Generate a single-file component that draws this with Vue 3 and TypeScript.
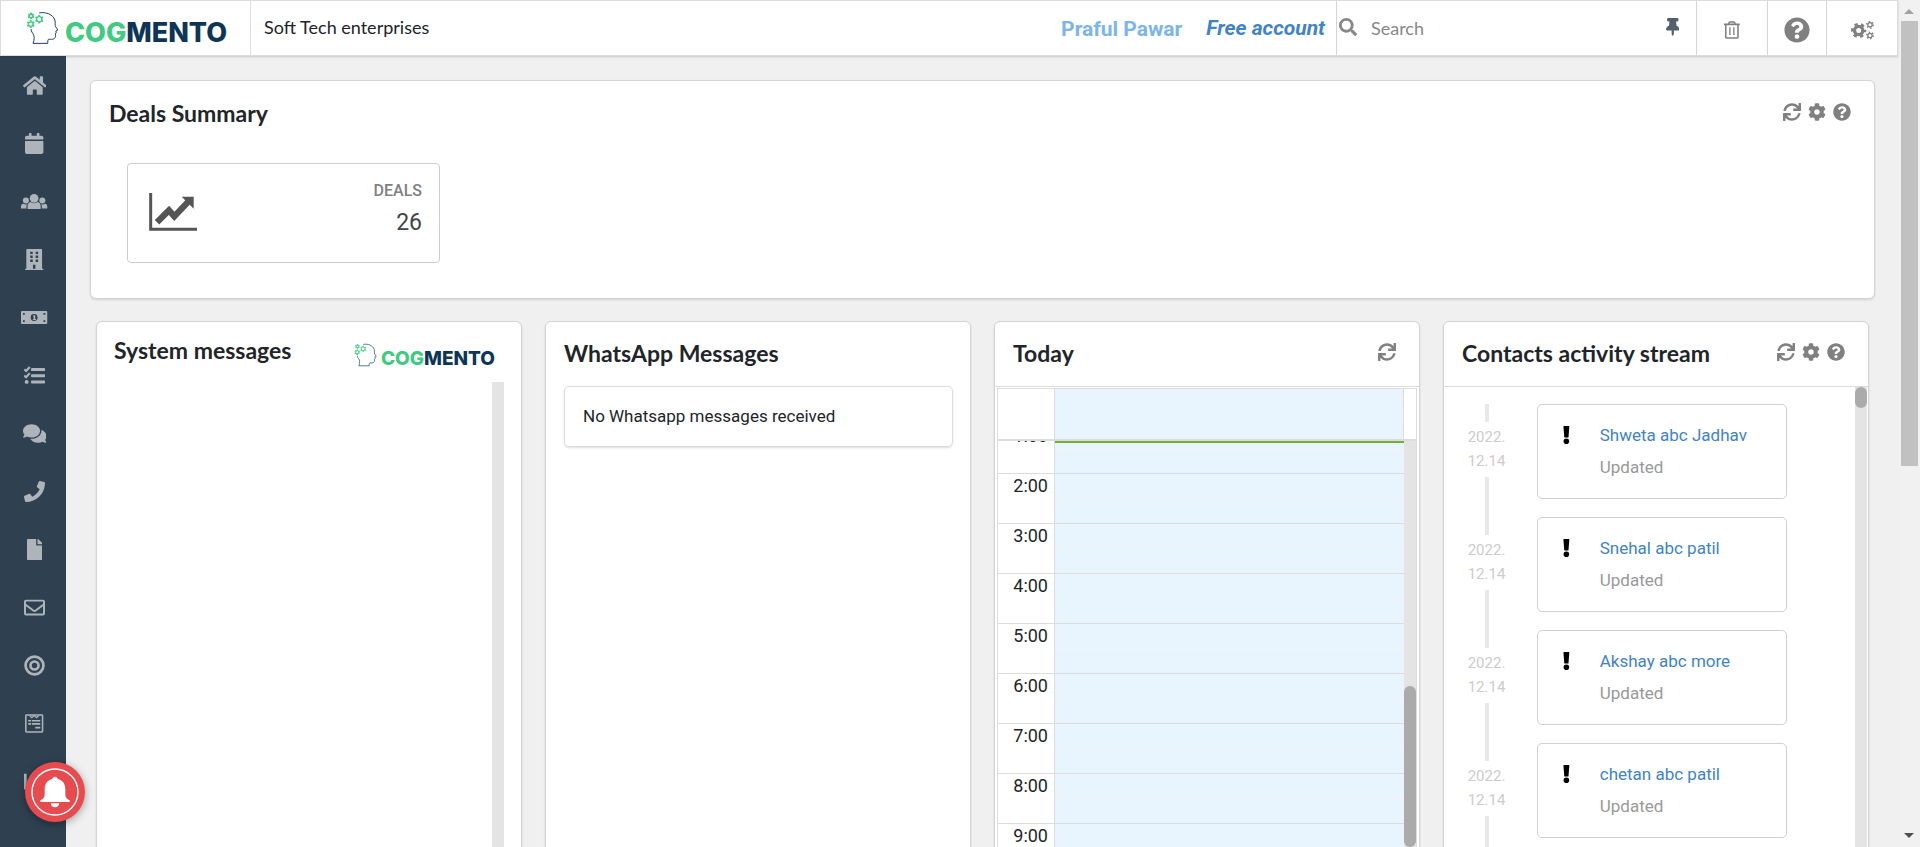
<script setup lang="ts">
import { h, type FunctionalComponent } from 'vue'

interface Shape {
  d: string
  line?: number
}
interface Glyph {
  width: number
  shapes: Shape[]
}

const gearPath =
  'M487.4 315.7l-42.6-24.6c4.3-23.2 4.3-47 0-70.2l42.6-24.6c4.9-2.8 7.1-8.6 5.5-14-11.1-35.6-30-67.8-54.7-94.6-3.8-4.1-10-5.1-14.8-2.3L380.8 110c-17.9-15.4-38.5-27.3-60.8-35.1V25.8c0-5.6-3.9-10.5-9.4-11.7-36.7-8.2-74.3-7.8-109.2 0-5.5 1.2-9.4 6.1-9.4 11.7V75c-22.2 7.9-42.8 19.8-60.8 35.1L88.7 85.5c-4.9-2.8-11-1.9-14.8 2.3-24.7 26.7-43.6 58.9-54.7 94.6-1.7 5.4.6 11.2 5.5 14L67.3 221c-4.3 23.2-4.3 47 0 70.2l-42.6 24.6c-4.9 2.8-7.1 8.6-5.5 14 11.1 35.6 30 67.8 54.7 94.6 3.8 4.1 10 5.1 14.8 2.3l42.6-24.6c17.9 15.4 38.5 27.3 60.8 35.1v49.2c0 5.6 3.9 10.5 9.4 11.7 36.7 8.2 74.3 7.8 109.2 0 5.5-1.2 9.4-6.1 9.4-11.7v-49.2c22.2-7.9 42.8-19.8 60.8-35.1l42.6 24.6c4.9 2.8 11 1.9 14.8-2.3 24.7-26.7 43.6-58.9 54.7-94.6 1.5-5.5-.7-11.3-5.6-14.1zM256 336c-44.1 0-80-35.9-80-80s35.9-80 80-80 80 35.9 80 80-35.9 80-80 80z'

const circle = (cx: number, cy: number, r: number): string =>
  `M${cx - r} ${cy}a${r} ${r} 0 1 0 ${2 * r} 0a${r} ${r} 0 1 0 ${-2 * r} 0z`

const box = (x: number, y: number, w: number, hgt: number): string =>
  `M${x} ${y}h${w}v${hgt}h${-w}z`

const windows = [64, 160, 256].map((y) => box(128, y, 60, 60) + box(260, y, 60, 60)).join('')

const glyphs: Record<string, Glyph> = {
  home: {
    width: 576,
    shapes: [{ d: 'M280.37 148.26L96 300.11V464a16 16 0 0 0 16 16l112.06-.29a16 16 0 0 0 15.92-16V368a16 16 0 0 1 16-16h64a16 16 0 0 1 16 16v95.64a16 16 0 0 0 16 16.05L464 480a16 16 0 0 0 16-16V300L295.67 148.26a12.19 12.19 0 0 0-15.3 0zM571.6 251.47L488 182.56V44.05a12 12 0 0 0-12-12h-56a12 12 0 0 0-12 12v72.61L318.47 43a48 48 0 0 0-61 0L4.34 251.47a12 12 0 0 0-1.6 16.9l25.5 31A12 12 0 0 0 45.15 301l235.22-193.74a12.19 12.19 0 0 1 15.3 0L530.9 301a12 12 0 0 0 16.9-1.6l25.5-31a12 12 0 0 0-1.7-16.93z' }],
  },
  calendar: {
    width: 448,
    shapes: [{ d: 'M12 192h424c6.6 0 12 5.4 12 12v260c0 26.5-21.5 48-48 48H48c-26.5 0-48-21.5-48-48V204c0-6.6 5.4-12 12-12zm436-44v-36c0-26.5-21.5-48-48-48h-48V12c0-6.6-5.4-12-12-12h-40c-6.6 0-12 5.4-12 12v52H160V12c0-6.6-5.4-12-12-12h-40c-6.6 0-12 5.4-12 12v52H48C21.5 64 0 85.5 0 112v36c0 6.6 5.4 12 12 12h424c6.6 0 12-5.4 12-12z' }],
  },
  users: {
    width: 640,
    shapes: [
      { d: circle(320, 178, 106) },
      { d: circle(120, 232, 74) },
      { d: circle(520, 232, 74) },
      { d: 'M160 441V360c0-50 32-84 78-90 50 38 114 38 164 0 46 6 78 40 78 90v81z' },
      { d: 'M0 425v-52c0-34 22-60 60-64 40 28 80 28 98-6-18 20-26 40-26 66v56z' },
      { d: 'M640 425v-52c0-34-22-60-60-64-40 28-80 28-98-6 18 20 26 40 26 66v56z' },
    ],
  },
  building: {
    width: 448,
    shapes: [{ d: 'M436 480h-20V24c0-13.3-10.7-24-24-24H56C42.7 0 32 10.7 32 24v456H12c-6.6 0-12 5.4-12 12v20h448v-20c0-6.6-5.4-12-12-12z' + windows + box(194, 384, 60, 96) }],
  },
  money: {
    width: 640,
    shapes: [
      { d: 'M24 96h592a24 24 0 0 1 24 24v272a24 24 0 0 1-24 24H24a24 24 0 0 1-24-24V120a24 24 0 0 1 24-24z' + circle(320, 256, 84) + box(48, 146, 44, 44) + box(548, 146, 44, 44) + box(48, 322, 44, 44) + box(548, 322, 44, 44) },
      { d: 'M288 222l28-20h32v88h18v28h-76v-28h18v-46z' },
    ],
  },
  tasks: {
    width: 512,
    shapes: [
      { d: 'M188 76h308a16 16 0 0 1 16 16v40a16 16 0 0 1-16 16H188a16 16 0 0 1-16-16V92a16 16 0 0 1 16-16zM188 224h308a16 16 0 0 1 16 16v40a16 16 0 0 1-16 16H188a16 16 0 0 1-16-16v-40a16 16 0 0 1 16-16zM188 376h308a16 16 0 0 1 16 16v40a16 16 0 0 1-16 16H188a16 16 0 0 1-16-16v-40a16 16 0 0 1 16-16z' },
      { d: 'M8 106l44 42 88-100', line: 52 },
      { d: 'M8 256l44 42 88-100', line: 52 },
      { d: circle(64, 412, 48) },
    ],
  },
  comments: {
    width: 576,
    shapes: [{ d: 'M416 192c0-88.4-93.1-160-208-160S0 103.6 0 192c0 34.3 14.1 65.9 38 92-13.4 30.2-35.5 54.2-35.8 54.5-2.2 2.3-2.8 5.7-1.5 8.7S4.8 352 8 352c36.6 0 66.9-12.3 88.7-25 32.2 15.7 70.3 25 111.3 25 114.9 0 208-71.6 208-160zm122 220c23.9-26 38-57.7 38-92 0-66.9-53.5-124.2-129.3-148.1.9 6.6 1.3 13.3 1.3 20.1 0 105.9-107.7 192-240 192-10.8 0-21.3-.8-31.7-1.9C207.8 439.6 281.8 480 368 480c41 0 79.1-9.2 111.3-25 21.8 12.7 52.1 25 88.7 25 3.2 0 6.1-1.9 7.3-4.8 1.3-2.9.7-6.3-1.5-8.7-.3-.3-22.4-24.2-35.8-54.5z' }],
  },
  phone: {
    width: 512,
    shapes: [{ d: 'M493.4 24.6l-104-24c-11.3-2.6-22.9 3.3-27.5 13.9l-48 112c-4.2 9.8-1.4 21.3 6.9 28l60.6 49.6c-36 76.7-98.9 140.5-177.2 177.2l-49.6-60.6c-6.8-8.3-18.2-11.1-28-6.9l-112 48C3.9 366.5-2 378.1.6 389.4l24 104C27.1 504.2 36.7 512 48 512c256.1 0 464-207.5 464-464 0-11.2-7.7-20.9-18.6-23.4z' }],
  },
  file: {
    width: 384,
    shapes: [{ d: 'M224 136V0H24C10.7 0 0 10.7 0 24v464c0 13.3 10.7 24 24 24h336c13.3 0 24-10.7 24-24V160H248c-13.2 0-24-10.8-24-24zm160-14.1v6.1H256V0h6.1c6.4 0 12.5 2.5 17 7l97.9 98c4.5 4.5 7 10.6 7 16.9z' }],
  },
  envelope: {
    width: 512,
    shapes: [
      { d: 'M48 88h416a24 24 0 0 1 24 24v288a24 24 0 0 1-24 24H48a24 24 0 0 1-24-24V112a24 24 0 0 1 24-24z', line: 48 },
      { d: 'M24 178L226 330Q256 350 286 330L488 178', line: 48 },
    ],
  },
  target: {
    width: 512,
    shapes: [
      { d: circle(256, 256, 218), line: 66 },
      { d: circle(256, 256, 98), line: 64 },
    ],
  },
  form: {
    width: 448,
    shapes: [
      { d: 'M36 50h376a16 16 0 0 1 16 16v380a16 16 0 0 1-16 16H36a16 16 0 0 1-16-16V66a16 16 0 0 1 16-16z', line: 38 },
      { d: 'M110 60l56 52 58-52 58 52 56-52', line: 30 },
      { d: box(78, 170, 70, 40) + box(168, 170, 204, 40) + box(78, 246, 70, 40) + box(168, 246, 204, 40) + box(250, 336, 122, 44) },
    ],
  },
  chart: {
    width: 512,
    shapes: [
      { d: box(0, 64, 64, 384) + box(64, 384, 448, 64) },
      { d: 'M120 320l90-90 70 70 130-140', line: 64 },
    ],
  },
  search: {
    width: 512,
    shapes: [{ d: 'M505 442.7L405.3 343c-4.5-4.5-10.6-7-17-7H372c27.6-35.3 44-79.7 44-128C416 93.1 322.9 0 208 0S0 93.1 0 208s93.1 208 208 208c48.3 0 92.7-16.4 128-44v16.3c0 6.4 2.5 12.5 7 17l99.7 99.7c9.4 9.4 24.6 9.4 33.9 0l28.3-28.3c9.4-9.4 9.4-24.6.1-34zM208 336c-70.7 0-128-57.2-128-128 0-70.7 57.2-128 128-128 70.7 0 128 57.2 128 128 0 70.7-57.2 128-128 128z' }],
  },
  pin: {
    width: 384,
    shapes: [{ d: 'M298.028 214.267L285.793 96H328c13.255 0 24-10.745 24-24V24c0-13.255-10.745-24-24-24H56C42.745 0 32 10.745 32 24v48c0 13.255 10.745 24 24 24h42.207L85.972 214.267C37.465 236.82 0 277.261 0 328c0 13.255 10.745 24 24 24h136v104.007c0 1.242.289 2.467.845 3.578l24 48c2.941 5.882 11.364 5.893 14.311 0l24-48a8.008 8.008 0 0 0 .845-3.578V352h136c13.255 0 24-10.745 24-24-.001-51.183-37.983-91.42-85.973-113.733z' }],
  },
  trash: {
    width: 448,
    shapes: [
      { d: 'M0 96h448M140 90V58a30 30 0 0 1 30-30h108a30 30 0 0 1 30 30v32M50 100v364a20 20 0 0 0 20 20h308a20 20 0 0 0 20-20V100', line: 44 },
      { d: 'M168 180v220M280 180v220', line: 38 },
    ],
  },
  help: {
    width: 512,
    shapes: [{ d: 'M504 256c0 136.997-111.043 248-248 248S8 392.997 8 256C8 119.083 119.043 8 256 8s248 111.083 248 248zM262.655 90c-54.497 0-89.255 22.957-116.549 63.758-3.536 5.286-2.353 12.415 2.715 16.258l34.699 26.31c5.205 3.947 12.621 3.008 16.665-2.122 17.864-22.658 30.113-35.797 57.303-35.797 20.429 0 45.698 13.148 45.698 32.958 0 14.976-12.363 22.667-32.534 33.976C247.128 238.528 216 254.941 216 296v4c0 6.627 5.373 12 12 12h56c6.627 0 12-5.373 12-12v-1.333c0-28.462 83.186-29.647 83.186-106.667 0-58.002-60.165-102-116.531-102zM256 338c-25.365 0-46 20.635-46 46 0 25.364 20.635 46 46 46s46-20.636 46-46c0-25.365-20.635-46-46-46z' }],
  },
  gear: { width: 512, shapes: [{ d: gearPath }] },
  refresh: {
    width: 512,
    shapes: [{ d: 'M440.65 12.57l4 82.77A247.16 247.16 0 0 0 255.83 8C134.73 8 33.91 94.92 12.29 209.82A12 12 0 0 0 24.09 224h49.05a12 12 0 0 0 11.67-9.26 175.91 175.91 0 0 1 317-56.94l-101.46-4.86a12 12 0 0 0-12.57 12v47.41a12 12 0 0 0 12 12H500a12 12 0 0 0 12-12V12a12 12 0 0 0-12-12h-47.37a12 12 0 0 0-11.98 12.57zM255.83 432a175.61 175.61 0 0 1-146-77.8l101.8 4.87a12 12 0 0 0 12.57-12v-47.4a12 12 0 0 0-12-12H12a12 12 0 0 0-12 12V500a12 12 0 0 0 12 12h47.35a12 12 0 0 0 12-12.6l-4.15-82.57A247.17 247.17 0 0 0 255.83 504c121.11 0 221.93-86.92 243.55-201.82a12 12 0 0 0-11.8-14.18h-49.05a12 12 0 0 0-11.67 9.26A175.86 175.86 0 0 1 255.83 432z' }],
  },
  alert: {
    width: 192,
    shapes: [{ d: 'M24 0h144a12 12 0 0 1 12 13l-24 304a14 14 0 0 1-14 13H50a14 14 0 0 1-14-13L12 13A12 12 0 0 1 24 0z' + circle(96, 432, 80) }],
  },
}

const Icon: FunctionalComponent<{ name: string }> = (props) => {
  const glyph = glyphs[props.name]
  return h(
    'svg',
    { viewBox: `0 0 ${glyph.width} 512`, class: 'icon', 'aria-hidden': 'true' },
    glyph.shapes.map((s) =>
      s.line
        ? h('path', { d: s.d, fill: 'none', stroke: 'currentColor', 'stroke-width': s.line })
        : h('path', { d: s.d, fill: 'currentColor', 'fill-rule': 'evenodd' }),
    ),
  )
}
Icon.props = ['name']

const gearRing = (cx: number, cy: number, r: number) => [
  h('circle', { cx, cy, r, fill: 'none', stroke: '#41ca82', 'stroke-width': 4 }),
  ...[0, 60, 120, 180, 240, 300].map((a) =>
    h('rect', {
      x: cx - 3, y: cy - r - 5, width: 6, height: 5, fill: '#41ca82',
      transform: `rotate(${a} ${cx} ${cy})`,
    }),
  ),
]

const Brand: FunctionalComponent = () =>
  h('span', { class: 'brand', role: 'img', 'aria-label': 'Cogmento' }, [
    h('svg', { viewBox: '78 32 100 104', class: 'brand-head' }, [
      h('path', {
        d: 'M118 38C138 34 160 42 166 60C168 68 165 75 168 80L175 90L169 93L170 99L167 102L168 106C168 118 160 120 147 118C144 120 144 126 144 131H99C104 118 104 108 98 100C94 95 93 91 93 87',
        fill: 'none', stroke: '#1c3d5e', 'stroke-width': 3, 'stroke-linejoin': 'round',
      }),
      ...gearRing(118, 57, 8),
      ...gearRing(93, 47, 5),
      ...gearRing(92, 72, 7),
    ]),
    h('span', { class: 'brand-text' }, [h('span', { class: 'brand-green' }, 'COG'), 'MENTO']),
  ])

const navigation = [
  { icon: 'home', label: 'Home' },
  { icon: 'calendar', label: 'Calendar' },
  { icon: 'users', label: 'Contacts' },
  { icon: 'building', label: 'Companies' },
  { icon: 'money', label: 'Deals' },
  { icon: 'tasks', label: 'Tasks' },
  { icon: 'comments', label: 'Cases' },
  { icon: 'phone', label: 'Calls' },
  { icon: 'file', label: 'Documents' },
  { icon: 'envelope', label: 'Email' },
  { icon: 'target', label: 'Campaigns' },
  { icon: 'form', label: 'Forms' },
  { icon: 'chart', label: 'Reports' },
]

const hours = [1, 2, 3, 4, 5, 6, 7, 8, 9]

const activity = [
  { name: 'Shweta abc Jadhav', action: 'Updated' },
  { name: 'Snehal abc patil', action: 'Updated' },
  { name: 'Akshay abc more', action: 'Updated' },
  { name: 'chetan abc patil', action: 'Updated' },
]
</script>

<template>
  <div class="app">
    <div class="shell">
      <header class="topbar">
        <a class="topbar-logo" href="#"><Brand /></a>
        <span class="company">Soft Tech enterprises</span>
        <span class="user-name">Praful Pawar</span>
        <a class="plan" href="#">Free account</a>
        <label class="search">
          <Icon name="search" />
          <input type="text" placeholder="Search" aria-label="Search" />
          <button class="pin" type="button" aria-label="Pin"><Icon name="pin" /></button>
        </label>
        <button class="tool tool-trash" type="button" aria-label="Trash"><Icon name="trash" /></button>
        <button class="tool tool-help" type="button" aria-label="Help"><Icon name="help" /></button>
        <button class="tool tool-settings" type="button" aria-label="Settings">
          <svg class="gears" viewBox="0 0 72 56" aria-hidden="true">
            <g fill="none" stroke="currentColor">
              <circle cx="23" cy="28" r="12.500" stroke-width="10" />
              <circle cx="23" cy="28" r="19" stroke-width="8" stroke-dasharray="9.900 10" stroke-dashoffset="5" />
              <circle cx="57" cy="11" r="6.500" stroke-width="4" />
              <circle cx="57" cy="11" r="10" stroke-width="4" stroke-dasharray="4.470 6" />
              <circle cx="57" cy="43" r="6.500" stroke-width="4" />
              <circle cx="57" cy="43" r="10" stroke-width="4" stroke-dasharray="4.470 6" />
            </g>
          </svg>
        </button>
      </header>

      <div class="body">
        <nav class="sidebar" aria-label="Main">
          <a v-for="item in navigation" :key="item.icon" href="#" :aria-label="item.label">
            <Icon :name="item.icon" />
          </a>
        </nav>

        <main class="content">
          <section class="card summary">
            <div class="summary-head">
              <h2>Deals Summary</h2>
              <div class="actions">
                <button type="button" aria-label="Refresh"><Icon name="refresh" /></button>
                <button type="button" aria-label="Configure"><Icon name="gear" /></button>
                <button type="button" aria-label="Help"><Icon name="help" /></button>
              </div>
            </div>
            <a class="stat" href="#">
              <svg class="trend" viewBox="0 0 144 114" aria-hidden="true">
                <path d="M5 0V109H144" fill="none" stroke="#555" stroke-width="9" />
                <path d="M24 88L60 52L76 70L118 26" fill="none" stroke="#555" stroke-width="19" />
                <path d="M98 11H134V47Z" fill="#555" />
              </svg>
              <span class="stat-text">
                <span class="stat-label">DEALS</span>
                <span class="stat-value">26</span>
              </span>
            </a>
          </section>

          <div class="widgets">
            <section class="card">
              <div class="system-head">
                <h2>System messages</h2>
                <Brand class="brand-small" />
              </div>
              <div class="system-body"><div class="track"></div></div>
            </section>

            <section class="card">
              <div class="card-head card-head-plain">
                <h2>WhatsApp Messages</h2>
              </div>
              <p class="notice">No Whatsapp messages received</p>
            </section>

            <section class="card">
              <div class="card-head">
                <h2>Today</h2>
                <div class="actions">
                  <button type="button" aria-label="Refresh"><Icon name="refresh" /></button>
                </div>
              </div>
              <div class="agenda">
                <div class="agenda-top">
                  <div class="agenda-axis"></div>
                  <div class="agenda-allday"></div>
                  <div class="agenda-gutter"></div>
                </div>
                <div class="agenda-scroll">
                  <div class="agenda-view">
                    <div class="hours">
                      <div v-for="hour in hours" :key="hour" class="hour">
                        <div class="hour-label">{{ hour }}:00</div>
                        <div class="hour-slots"><div class="slot"></div></div>
                      </div>
                    </div>
                    <div class="now"></div>
                  </div>
                  <div class="track"><div class="thumb thumb-agenda"></div></div>
                </div>
              </div>
            </section>

            <section class="card">
              <div class="card-head">
                <h2>Contacts activity stream</h2>
                <div class="actions">
                  <button type="button" aria-label="Refresh"><Icon name="refresh" /></button>
                  <button type="button" aria-label="Configure"><Icon name="gear" /></button>
                  <button type="button" aria-label="Help"><Icon name="help" /></button>
                </div>
              </div>
              <div class="stream">
                <ul class="events">
                  <li v-for="event in activity" :key="event.name" class="event">
                    <div class="when">
                      <span class="line line-before"></span>
                      <span class="date">2022.<br />12.14</span>
                      <span class="line line-after"></span>
                    </div>
                    <div class="event-box">
                      <Icon name="alert" />
                      <div>
                        <a href="#">{{ event.name }}</a>
                        <p>{{ event.action }}</p>
                      </div>
                    </div>
                  </li>
                </ul>
                <div class="track"><div class="thumb thumb-stream"></div></div>
              </div>
            </section>
          </div>
        </main>
      </div>
    </div>

    <div class="page-scroll" aria-hidden="true">
      <div class="arrow arrow-up"></div>
      <div class="page-thumb"></div>
      <div class="arrow arrow-down"></div>
    </div>

    <button class="bell" type="button" aria-label="Notifications">
      <svg viewBox="0 0 180 180" aria-hidden="true">
        <circle cx="90" cy="90" r="69" fill="none" stroke="#fff" stroke-width="4" />
        <path d="M90 44C95 44 98 47 98 51C112 54 121 65 121 80V96C121 106 124 110 134 115V120H46V115C56 110 59 106 59 96V80C59 65 68 54 82 51C82 47 85 44 90 44Z" fill="#fff" />
        <path d="M77 124H103C102 132 97 136 90 136S78 132 77 124Z" fill="#fff" />
      </svg>
    </button>
  </div>
</template>

<style>
body {
  margin: 0;
}
</style>

<style scoped>
.app {
  display: flex;
  position: relative;
  height: 100vh;
  overflow: hidden;
  background: #f0f0f0;
  color: #212529;
  font-family: Roboto, "Liberation Sans", sans-serif;
  font-size: 17px;
  line-height: 24px;
}
.app * {
  box-sizing: border-box;
}
a {
  color: #4183c4;
  text-decoration: none;
}
button {
  display: flex;
  align-items: center;
  justify-content: center;
  padding: 0;
  border: 0;
  background: none;
  color: #808080;
}
h2,
p,
ul {
  margin: 0;
  padding: 0;
}
h2 {
  flex: 1;
  color: #212529;
  font: 700 23px/30px Lato, sans-serif;
}
.icon {
  display: block;
  height: 18px;
}
.shell {
  display: flex;
  flex: 1;
  flex-direction: column;
  min-width: 0;
}

.topbar {
  display: flex;
  z-index: 1;
  flex: none;
  height: 56px;
  border: 1px solid #dcdcdc;
  background: #fff;
  box-shadow: 0 1px 2px rgba(34, 36, 38, 0.2);
}
.topbar-logo {
  display: flex;
  align-items: flex-start;
  width: 250px;
  padding: 10px 0 0 25px;
  border-right: 1px solid #ddd;
}
.brand {
  display: flex;
  align-items: flex-end;
  color: #0f3556;
  font: 800 27px/24px Inter, sans-serif;
}
.brand :deep(.brand-head) {
  width: 33px;
  height: 34px;
  margin-right: 6px;
}
.brand :deep(.brand-green) {
  color: #41ca82;
}
.company {
  flex: 1;
  padding-left: 13px;
  font: 400 18px/52px Lato, sans-serif;
}
.user-name {
  color: #7cb5ec;
  font-size: 21px;
  font-weight: 700;
  line-height: 56px;
}
.plan {
  padding: 0 11px 0 24px;
  font-size: 21px;
  font-style: italic;
  font-weight: 700;
  line-height: 54px;
}
.search {
  display: flex;
  align-items: center;
  width: 360px;
  padding: 0 17px 2px 2px;
  border-left: 1px solid #d4d4d5;
  color: #888;
}
.search input {
  flex: 1;
  min-width: 0;
  padding: 2px 14px 0;
  border: 0;
  outline: 0;
  background: none;
  font: 400 18px/24px Lato, sans-serif;
}
.search input::placeholder {
  color: #888;
}
.pin {
  color: #55606c;
}
.tool {
  padding-top: 4px;
  border-left: 1px solid #d4d4d5;
}
.tool-trash {
  width: 71px;
}
.tool-help {
  width: 59px;
}
.tool-help .icon {
  height: 26px;
}
.tool-settings {
  width: 71px;
  padding-left: 2px;
}
.gears {
  width: 24px;
  height: 19px;
}

.body {
  display: flex;
  flex: 1;
  min-height: 0;
}
.sidebar {
  flex: none;
  width: 66px;
  background: #2f4050;
}
.sidebar a {
  display: flex;
  align-items: center;
  justify-content: center;
  height: 58px;
  padding-left: 3px;
  color: #adb4ba;
}
.sidebar .icon {
  height: 21px;
}
.content {
  flex: 1;
  min-width: 0;
  padding: 24px 23px 0 24px;
  overflow: hidden;
}
.card {
  border: 1px solid #d4d4d5;
  border-radius: 6px;
  background: #fff;
  box-shadow: 0 1px 2px rgba(34, 36, 38, 0.15);
}
.summary {
  height: 219px;
  padding: 15px 23px 0 18px;
}
.summary-head {
  display: flex;
  align-items: center;
}
.summary h2 {
  padding-top: 2px;
}
.actions {
  display: flex;
  gap: 7px;
}
.stat {
  display: flex;
  justify-content: space-between;
  width: 313px;
  height: 100px;
  margin: 35px 0 0 18px;
  padding: 15px 17px 0 21px;
  border: 1px solid #ccc;
  border-radius: 4px;
}
.trend {
  width: 48px;
  height: 38px;
  margin-top: 14px;
}
.stat-text {
  display: flex;
  flex-direction: column;
  gap: 8px;
  text-align: right;
}
.stat-label {
  color: #808080;
  font-size: 16px;
  font-weight: 500;
  line-height: 24px;
}
.stat-value {
  color: #444;
  font-size: 23px;
  line-height: 24px;
}

.widgets {
  display: grid;
  grid-template-columns: repeat(4, 1fr);
  grid-auto-rows: 640px;
  gap: 23px;
  padding: 22px 6px 0;
}
.widgets .card {
  display: flex;
  flex-direction: column;
  min-width: 0;
}
.card-head {
  display: flex;
  align-items: center;
  height: 65px;
  padding: 0 23px 4px 18px;
  border-bottom: 1px solid #dcdcdc;
}
.card-head h2 {
  padding-top: 2px;
}
.card-head-plain {
  border-color: transparent;
}
.system-head {
  display: flex;
  align-items: flex-start;
  height: 60px;
  padding: 13px 26px 0 17px;
}
.brand-small {
  margin-top: 8px;
  font-size: 19px;
  line-height: 17px;
}
.brand-small :deep(.brand-head) {
  width: 23px;
  height: 24px;
  margin-right: 4px;
}
.system-body {
  display: flex;
  flex: 1;
  justify-content: flex-end;
  padding-right: 17px;
}
.track {
  flex: none;
  width: 12px;
  background: #e4e4e4;
}
.thumb {
  border-radius: 6px;
  background: #ababab;
}
.notice {
  margin: -1px 17px 0 18px;
  padding: 17px 18px 18px;
  border: 1px solid #dcdcdc;
  border-radius: 5px;
  box-shadow: 0 1px 2px rgba(34, 36, 38, 0.15);
}

.agenda {
  display: flex;
  flex: 1;
  flex-direction: column;
  min-height: 0;
  margin: 1px 2px 0;
  border: 1px solid #dcdcdc;
}
.agenda-top {
  display: flex;
  height: 52px;
  border-bottom: 2px solid #dcdcdc;
}
.agenda-axis {
  width: 57px;
  border-right: 1px solid #dcdcdc;
}
.agenda-allday {
  flex: 1;
  border-right: 1px solid #dcdcdc;
  background: #e8f4fe;
}
.agenda-gutter {
  width: 12px;
}
.agenda-scroll {
  display: flex;
  flex: 1;
  min-height: 0;
}
.agenda-view {
  position: relative;
  flex: 1;
  overflow: hidden;
}
/* The list is scrolled so that the one o'clock row is partly out of view. */
.hours {
  margin-top: -18px;
}
.hour {
  display: flex;
  height: 50px;
  border-top: 1px solid #dcdcdc;
}
.hour-label {
  width: 57px;
  padding-right: 6px;
  border-right: 1px solid #dcdcdc;
  font-size: 18px;
  text-align: right;
}
.hour-slots {
  flex: 1;
  background: #e8f4fe;
}
.slot {
  height: 25px;
  border-bottom: 1px solid #f2f5f7;
}
.now {
  position: absolute;
  top: 0;
  right: 0;
  left: 57px;
  height: 2px;
  background: #76ae33;
}
.thumb-agenda {
  height: 161px;
  margin-top: 245px;
}

.stream {
  display: flex;
  flex: 1;
  padding-right: 1px;
}
.events {
  flex: 1;
  padding: 17px 68px 0 20px;
  list-style: none;
}
.event {
  display: flex;
  height: 113px;
}
.when {
  display: flex;
  flex-direction: column;
  align-items: center;
  width: 45px;
  margin-right: 28px;
  color: #ccc;
  font-size: 15px;
}
.line {
  width: 4px;
  background: #e8e8e8;
}
.line-before {
  height: 18px;
}
.line-after {
  height: 40px;
}
.date {
  height: 55px;
  padding-top: 3px;
}
.event-box {
  display: flex;
  flex: 1;
  gap: 30px;
  height: 95px;
  padding: 18px 0 0 25px;
  border: 1px solid #d0d0d0;
  border-radius: 5px;
}
.event-box .icon {
  margin-top: 3px;
  color: #000;
}
.event-box p {
  margin-top: 8px;
  color: #999;
}
.thumb-stream {
  height: 21px;
}

.page-scroll {
  display: flex;
  flex: none;
  flex-direction: column;
  align-items: center;
  width: 22px;
  padding: 9px 0;
  background: #f1f1f1;
}
.page-thumb {
  width: 17px;
  height: 445px;
  margin: 7px 0 auto;
  background: #c1c1c1;
}
.arrow {
  border: 5px solid transparent;
}
.arrow-up {
  border-top: 0;
  border-bottom-color: #a3a3a3;
}
.arrow-down {
  border-bottom: 0;
  border-top-color: #505050;
}
.bell {
  position: absolute;
  bottom: 25px;
  left: 25px;
  z-index: 2;
  width: 60px;
  height: 60px;
  border-radius: 50%;
  background: #e64b4f;
  box-shadow: 0 2px 8px rgba(0, 0, 0, 0.35);
}
.bell svg {
  width: 60px;
  height: 60px;
}
</style>
